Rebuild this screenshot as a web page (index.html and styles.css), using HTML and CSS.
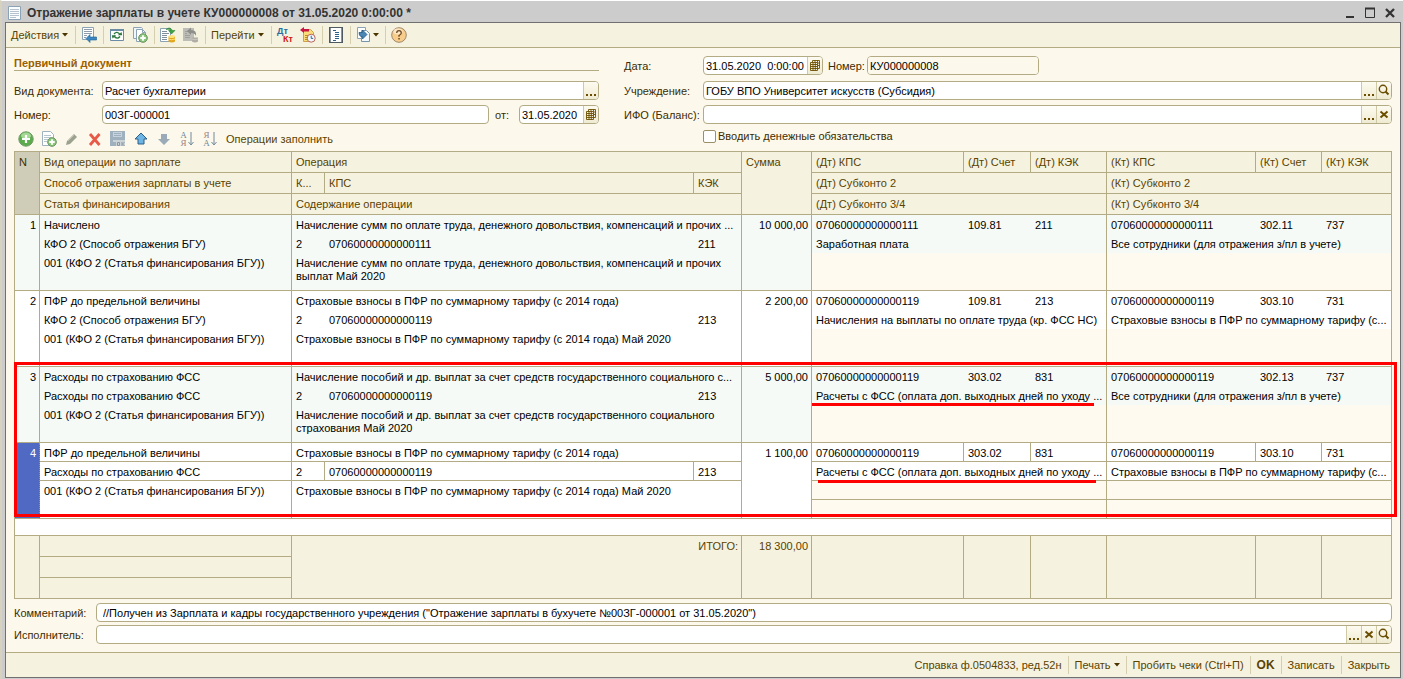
FILE: index.html
```html
<!DOCTYPE html>
<html lang="ru">
<head>
<meta charset="utf-8">
<title>Отражение зарплаты в учете</title>
<link rel="stylesheet" href="styles.css">
</head>
<body>
<svg class="defs" aria-hidden="true">
  <symbol id="sheet" viewBox="0 0 16 16"><path d="M1.500 1.500h12v13h-12z" fill="#fbfdfe" stroke="#8ba3b5"/><path d="M3 4.500h9M3 6.500h9M3 8.500h9M3 10.500h9M3 12.500h6" stroke="#b4c3cf"/></symbol>
  <symbol id="plus" viewBox="0 0 16 16"><circle cx="8" cy="8" r="7.200" fill="#5cab4c" stroke="#6f9a68"/><ellipse cx="8" cy="4.800" rx="5" ry="3.200" fill="#a5d895"/><path d="M8 4v8M4 8h8" stroke="#fff" stroke-width="2.200"/></symbol>
  <symbol id="copy" viewBox="0 0 16 16"><path d="M1.500 .5h8l1 1v10h-9z" fill="#f1f6fa" stroke="#8ba3b5"/><path d="M4.500 2.500h6l3 3v9h-9z" fill="#fff" stroke="#8ba3b5"/><path d="M10.500 2.500v3h3" fill="none" stroke="#8ba3b5"/><circle cx="11" cy="11" r="4.300" fill="#8cca7b" stroke="#66915f"/><path d="M11 8.300v5.400M8.300 11h5.400" stroke="#fff" stroke-width="1.800"/></symbol>
  <symbol id="addcopy" viewBox="0 0 16 16"><path d="M1.500 .5h8l3 3v11h-11z" fill="#fff" stroke="#9fb2c0"/><path d="M3 4.500h7M3 6.500h7M3 8.500h4M3 10.500h3" stroke="#b7c5cf"/><circle cx="11" cy="11" r="4.300" fill="#8cca7b" stroke="#66915f"/><path d="M11 8.300v5.400M8.300 11h5.400" stroke="#fff" stroke-width="1.800"/></symbol>
  <symbol id="dots" viewBox="0 0 14 17"><path d="M2 12h2v2H2zM6 12h2v2H6zM10 12h2v2h-2z" fill="#6b4e00"/></symbol>
  <symbol id="lens" viewBox="0 0 14 17"><circle cx="6" cy="7" r="3.700" fill="none" stroke="#6b4e00" stroke-width="1.400"/><path d="M8.500 9.500l3 3" stroke="#6b4e00" stroke-width="2"/></symbol>
  <symbol id="cross" viewBox="0 0 14 17"><path d="M3.500 5.500l7 6M10.500 5.500l-7 6" stroke="#6b4e00" stroke-width="2"/></symbol>
  <symbol id="cal" viewBox="0 0 14 17"><path d="M4.500 3.500h7v8h-2M4.500 3.500v2M7 3.500v2M9.500 3.500v2M9.500 6h2M9.500 8.500h2M2.500 5.500h7v8h-7zM2.500 7.500h7M2.500 9.500h7M2.500 11.500h7M5 5.500v8M7.300 5.500v8" fill="none" stroke="#6b4e00" stroke-width=".9"/></symbol>
  <symbol id="caret" viewBox="0 0 6 4"><path d="M0 0h6L3 3.500z" fill="#4a3500"/></symbol>
</svg>
<div class="window">
  <header class="titlebar">
    <svg class="icon"><use href="#sheet"/></svg>
    <h1>Отражение зарплаты в учете КУ000000008 от 31.05.2020 0:00:00 *</h1>
    <div class="winctl">
      <button aria-label="Свернуть"><svg viewBox="0 0 12 12"><path d="M2 10h8" stroke="#333" stroke-width="2"/></svg></button>
      <button aria-label="Развернуть"><svg viewBox="0 0 12 12"><path d="M1.500 1.500h9v9h-9z" fill="none" stroke="#333"/><path d="M1 1.500h10" stroke="#333" stroke-width="2"/></svg></button>
      <button aria-label="Закрыть окно"><svg viewBox="0 0 12 12"><path d="M2 2l8 8M10 2l-8 8" stroke="#333" stroke-width="2.300"/></svg></button>
    </div>
  </header>

  <div class="client">
  <nav class="toolbar">
    <div class="group"><button class="actions">Действия <svg class="caret"><use href="#caret"/></svg></button></div>
    <div class="group">
      <button aria-label="Найти в списке"><svg class="icon" viewBox="0 0 16 16"><path d="M1.500 .5h11v12h-11z" fill="#fff" stroke="#8ba3b5"/><path d="M3 2.500h8M3 4.500h8M3 6.500h8M3 8.500h3M3 10.500h2" stroke="#8f9daa"/><path d="M5 11.500l4-4V10h6.500v3H9v2.500z" fill="#3c88c0" stroke="#1d6296" stroke-width=".6"/></svg></button>
    </div>
    <div class="group">
      <button aria-label="Перечитать"><svg class="icon" viewBox="0 0 16 16"><path d="M1.500 2.500h13v11h-13z" fill="#fff" stroke="#6c8ca6"/><path d="M1 3h14" stroke="#6c8ca6" stroke-width="2"/><path d="M5 7q3-3.500 6 .5M11 9.500q-3 3.500-6-.5" fill="none" stroke="#2c7a3e" stroke-width="1.400"/><path d="M8.800 8.300h4.400L12.500 5zM2.800 8.200h4.400L3.500 11.500z" fill="#2c7a3e"/></svg></button>
      <button aria-label="Скопировать"><svg class="icon"><use href="#copy"/></svg></button>
    </div>
    <div class="group">
      <button aria-label="Провести"><svg class="icon" viewBox="0 0 16 16"><path d="M.5 1.500h10v13H.5z" fill="#fff" stroke="#8ba3b5"/><path d="M2 4.500h5M2 6.500h7M2 8.500h5M2 10.500h5M2 12.500h5" stroke="#7f8f9b"/><path d="M6 2.500Q10-1 12.500 3.500H15L11.500 7 8.500 3.500h2Q9 1.500 6 2.500z" fill="#3da344" stroke="#23782a" stroke-width=".5"/><path d="M8.500 9.500h6.500v5q-3 2-6.500 0z" fill="#e0a61e"/><ellipse cx="11.700" cy="9.500" rx="3.200" ry="1.500" fill="#ffe27a"/><path d="M8.500 12q3 1.500 6.500 0" fill="none" stroke="#ffe27a"/></svg></button>
      <button aria-label="Отменить проведение"><svg class="icon" viewBox="0 0 16 16"><path d="M0 1h11v13H0z" fill="#bdbdb8"/><path d="M2 4.500h3M2 6.500h2M2 8.500h5M2 10.500h5" stroke="#9f9f9b"/><path d="M4 4l4-3.500V3q6 0 5 6-1-3-5-3v2z" fill="#8e8e8b"/><path d="M9 10.500h6v4q-3 2-6 0z" fill="#aeaca4"/><path d="M9 12q3 1.500 6 0" fill="none" stroke="#cbc9bf"/></svg></button>
    </div>
    <div class="group"><button class="goto">Перейти <svg class="caret"><use href="#caret"/></svg></button></div>
    <div class="group">
      <button class="dtkt" aria-label="Результат проведения"><span class="dt">Дт</span><span class="kt">Кт</span></button>
      <button aria-label="Движения документа"><svg class="icon" viewBox="0 0 16 16"><path d="M3.500 2.500h7l3 3v9h-10z" fill="#fbdc7b" stroke="#c9a345"/><path d="M5 8.500h3M5 10.500h2M5 12.500h2" stroke="#b78b1f"/><path d="M0 3l4-3v2h5v2.500H4V6z" fill="#c81440"/><circle cx="11.200" cy="11.200" r="4" fill="#f0f8ff" stroke="#b9665a"/><path d="M11.200 8.700v2.700h2" fill="none" stroke="#31648f"/></svg></button>
    </div>
    <div class="group">
      <button aria-label="Структура"><svg class="icon" viewBox="0 0 16 16"><path d="M1 0h14v16H1z" fill="#8c959c"/><path d="M3 1h10v14H3z" fill="#fff"/><path d="M1.500 0v16M14.500 0v16" stroke="#4e5960"/><path d="M1 .5h14M1 15.500h14" stroke="#4e5960"/><path d="M5 3.500h3M7 5.500h4M7 7.500h4M7 9.500h4M7 11.500h4M5 13.500h3" stroke="#2d6288"/></svg></button>
    </div>
    <div class="group">
      <button class="linked" aria-label="Ввести на основании"><svg class="icon" viewBox="0 0 16 16"><path d="M1.500 .5h8v11h-8z" fill="#fff" stroke="#8ba3b5"/><path d="M5.500 3.500h5l3 3v8h-8z" fill="#f4f9fc" stroke="#7695ab"/><path d="M3 5.500h3.500V3l4.500 4.500L6.500 12V9.500H5Q3 9 3 5.500z" fill="#4a86b4" stroke="#174f80" stroke-width=".7"/></svg><svg class="caret"><use href="#caret"/></svg></button>
    </div>
    <div class="group">
      <button aria-label="Справка"><svg class="icon" viewBox="0 0 16 16"><circle cx="8" cy="8" r="7.300" fill="#f8cd8c" stroke="#9e876b"/><ellipse cx="7" cy="4.500" rx="4.500" ry="3" fill="#fde6c4"/><path d="M5.700 6q0-2.300 2.300-2.300T10.300 6Q10.300 7.300 8 8.500v1.300" fill="none" stroke="#6b4a20" stroke-width="1.300"/><path d="M7.300 11h1.500v1.500H7.300z" fill="#6b4a20"/></svg></button>
    </div>
  </nav>

  <main>
    <div class="form">
      <section class="col left">
        <h2>Первичный документ</h2>
        <div class="line"><label for="kind">Вид документа:</label>
          <div class="field grow"><input id="kind" value="Расчет бухгалтерии"><button aria-label="Выбрать вид"><svg><use href="#dots"/></svg></button></div></div>
        <div class="line"><label for="num">Номер:</label>
          <div class="field grow"><input id="num" value="00ЗГ-000001"></div>
          <label class="from" for="numdate">от:</label>
          <div class="field date"><input id="numdate" value="31.05.2020"><button aria-label="Календарь"><svg><use href="#cal"/></svg></button></div></div>
      </section>
      <section class="col right">
        <div class="line first"><label for="date">Дата:</label>
          <div class="field datetime"><input id="date" value="31.05.2020  0:00:00"><button aria-label="Календарь даты"><svg><use href="#cal"/></svg></button></div>
          <label class="short" for="docnum">Номер:</label>
          <div class="field docnum"><input id="docnum" value="КУ000000008"></div></div>
        <div class="line"><label for="org">Учреждение:</label>
          <div class="field grow"><input id="org" value="ГОБУ ВПО Университет искусств (Субсидия)"><button aria-label="Выбрать учреждение"><svg><use href="#dots"/></svg></button><button aria-label="Открыть учреждение"><svg><use href="#lens"/></svg></button></div></div>
        <div class="line"><label for="ifo">ИФО (Баланс):</label>
          <div class="field grow"><input id="ifo"><button aria-label="Выбрать ИФО"><svg><use href="#dots"/></svg></button><button aria-label="Очистить ИФО"><svg><use href="#cross"/></svg></button></div></div>
      </section>
      <div class="rowtools">
        <button aria-label="Добавить"><svg class="icon"><use href="#plus"/></svg></button>
        <button aria-label="Добавить копированием"><svg class="icon"><use href="#addcopy"/></svg></button>
        <button aria-label="Изменить"><svg class="icon" viewBox="0 0 16 16"><path d="M2 14l1-4 7-7 3 3-7 7z" fill="#9ba28e"/><path d="M4 10l6-6" stroke="#bdc2b3"/></svg></button>
        <button aria-label="Удалить"><svg class="icon" viewBox="0 0 16 16"><path d="M3 3l9.500 11M12.500 3L3 14" stroke="#e85a48" stroke-width="2.800"/></svg></button>
        <button aria-label="Завершить"><svg class="icon" viewBox="0 0 16 16"><path d="M0 0h15v15H0z" fill="#9fb0be"/><path d="M3 1h9v5H3z" fill="#c7d3dc"/><path d="M4 2.500h7M4 4.500h7" stroke="#9fb0be"/><path d="M3 9h12v6H6v-4H3z" fill="#ccd3d6"/><path d="M7.500 11.500h2v3h-2zM12 11v4M14.500 11L12.500 13l2 2" fill="none" stroke="#8897a3"/></svg></button>
        <button aria-label="Вверх"><svg class="icon" viewBox="0 0 16 16"><path d="M8 2l6 6h-3v5H5V8H2z" fill="#6cb4e4" stroke="#2c5f88"/></svg></button>
        <button aria-label="Вниз"><svg class="icon" viewBox="0 0 16 16"><path d="M8 14l6-6h-3V3H5v5H2z" fill="#9aabb7"/></svg></button>
        <button class="sort" aria-label="Сортировать по возрастанию"><span><i>А</i><i class="b">Я</i></span><svg viewBox="0 0 6 14"><path d="M3 0v12M.5 10L3 13l2.500-3" fill="none" stroke="#73899d"/></svg></button>
        <button class="sort" aria-label="Сортировать по убыванию"><span><i class="b">Я</i><i>А</i></span><svg viewBox="0 0 6 14"><path d="M3 0v12M.5 10L3 13l2.500-3" fill="none" stroke="#73899d"/></svg></button>
        <button class="fill">Операции заполнить</button>
      </div>
      <label class="check"><input type="checkbox">Вводить денежные обязательства</label>
    </div>

    <div class="tablewrap">
      <table>
        <colgroup><col class="w-n"><col class="w-kind"><col class="w-k"><col><col class="w-kek"><col class="w-sum"><col class="w-dt1"><col class="w-dt2"><col class="w-dt3"><col class="w-kt1"><col class="w-kt2"><col class="w-kt3"></colgroup>
        <thead>
          <tr><th rowspan="3" class="n">N</th><th>Вид операции по зарплате</th><th colspan="3">Операция</th><th rowspan="3">Сумма</th><th>(Дт) КПС</th><th>(Дт) Счет</th><th>(Дт) КЭК</th><th>(Кт) КПС</th><th>(Кт) Счет</th><th>(Кт) КЭК</th></tr>
          <tr><th>Способ отражения зарплаты в учете</th><th>К...</th><th>КПС</th><th>КЭК</th><th colspan="3">(Дт) Субконто 2</th><th colspan="3">(Кт) Субконто 2</th></tr>
          <tr><th>Статья финансирования</th><th colspan="3">Содержание операции</th><th colspan="3">(Дт) Субконто 3/4</th><th colspan="3">(Кт) Субконто 3/4</th></tr>
        </thead>
        <tbody class="tint">
          <tr><td rowspan="4" class="num e l">1</td><td class="e">Начислено</td><td colspan="3" class="e">Начисление сумм по оплате труда, денежного довольствия, компенсаций и прочих ...</td><td rowspan="4" class="num e l">10 000,00</td><td>07060000000000111</td><td>109.81</td><td class="e">211</td><td>07060000000000111</td><td>302.11</td><td class="e">737</td></tr>
          <tr><td class="e">КФО 2 (Способ отражения БГУ)</td><td>2</td><td>07060000000000111</td><td class="e">211</td><td colspan="3" class="e">Заработная плата</td><td colspan="3" class="e">Все сотрудники (для отражения з/пл в учете)</td></tr>
          <tr><td rowspan="2" class="e l">001 (КФО 2 (Статья финансирования БГУ))</td><td colspan="3" rowspan="2" class="e l">Начисление сумм по оплате труда, денежного довольствия, компенсаций и прочих<br>выплат Май 2020</td><td colspan="3" class="e p"></td><td colspan="3" class="e p"></td></tr>
          <tr><td colspan="3" class="e l p"></td><td colspan="3" class="e l p"></td></tr>
        </tbody>
        <tbody>
          <tr><td rowspan="4" class="num e l">2</td><td class="e">ПФР до предельной величины</td><td colspan="3" class="e">Страховые взносы в ПФР по суммарному тарифу (с 2014 года)</td><td rowspan="4" class="num e l">2 200,00</td><td>07060000000000119</td><td>109.81</td><td class="e">213</td><td>07060000000000119</td><td>303.10</td><td class="e">731</td></tr>
          <tr><td class="e">КФО 2 (Способ отражения БГУ)</td><td>2</td><td>07060000000000119</td><td class="e">213</td><td colspan="3" class="e">Начисления на выплаты по оплате труда (кр. ФСС НС)</td><td colspan="3" class="e">Страховые взносы в ПФР по суммарному тарифу (с...</td></tr>
          <tr><td rowspan="2" class="e l">001 (КФО 2 (Статья финансирования БГУ))</td><td colspan="3" rowspan="2" class="e l">Страховые взносы в ПФР по суммарному тарифу (с 2014 года) Май 2020</td><td colspan="3" class="e p"></td><td colspan="3" class="e p"></td></tr>
          <tr><td colspan="3" class="e l p"></td><td colspan="3" class="e l p"></td></tr>
        </tbody>
        <tbody class="tint">
          <tr><td rowspan="4" class="num e l">3</td><td class="e">Расходы по страхованию ФСС</td><td colspan="3" class="e">Начисление пособий и др. выплат за счет средств государственного социального с...</td><td rowspan="4" class="num e l">5 000,00</td><td>07060000000000119</td><td>303.02</td><td class="e">831</td><td>07060000000000119</td><td>302.13</td><td class="e">737</td></tr>
          <tr><td class="e">Расходы по страхованию ФСС</td><td>2</td><td>07060000000000119</td><td class="e">213</td><td colspan="3" class="e marked">Расчеты с ФСС (оплата доп. выходных дней по уходу ...</td><td colspan="3" class="e">Все сотрудники (для отражения з/пл в учете)</td></tr>
          <tr><td rowspan="2" class="e l">001 (КФО 2 (Статья финансирования БГУ))</td><td colspan="3" rowspan="2" class="e l">Начисление пособий и др. выплат за счет средств государственного социального<br>страхования Май 2020</td><td colspan="3" class="e p"></td><td colspan="3" class="e p"></td></tr>
          <tr><td colspan="3" class="e l p"></td><td colspan="3" class="e l p"></td></tr>
        </tbody>
        <tbody class="selected">
          <tr><td rowspan="4" class="num current">4</td><td>ПФР до предельной величины</td><td colspan="3">Страховые взносы в ПФР по суммарному тарифу (с 2014 года)</td><td rowspan="4" class="num">1 100,00</td><td>07060000000000119</td><td>303.02</td><td>831</td><td>07060000000000119</td><td>303.10</td><td>731</td></tr>
          <tr><td>Расходы по страхованию ФСС</td><td>2</td><td>07060000000000119</td><td>213</td><td colspan="3" class="marked inset">Расчеты с ФСС (оплата доп. выходных дней по уходу ...</td><td colspan="3">Страховые взносы в ПФР по суммарному тарифу (с...</td></tr>
          <tr><td rowspan="2">001 (КФО 2 (Статья финансирования БГУ))</td><td colspan="3" rowspan="2">Страховые взносы в ПФР по суммарному тарифу (с 2014 года) Май 2020</td><td colspan="3" class="p"></td><td colspan="3" class="p"></td></tr>
          <tr><td colspan="3" class="p"></td><td colspan="3" class="p"></td></tr>
        </tbody>
        <tbody><tr class="spare"><td colspan="12" class="e l"></td></tr></tbody>
        <tfoot>
          <tr><td rowspan="3"></td><td></td><td rowspan="3" colspan="3" class="num">ИТОГО:</td><td rowspan="3" class="num">18 300,00</td><td rowspan="3"></td><td rowspan="3"></td><td rowspan="3"></td><td rowspan="3"></td><td rowspan="3"></td><td rowspan="3"></td></tr>
          <tr><td></td></tr>
          <tr><td></td></tr>
        </tfoot>
      </table>
      <div class="redbox"></div>
    </div>

    <div class="notes">
      <div class="line"><label for="comment">Комментарий:</label>
        <div class="field grow wide"><input id="comment" value="//Получен из Зарплата и кадры государственного учреждения (&quot;Отражение зарплаты в бухучете №00ЗГ-000001 от 31.05.2020&quot;)"></div></div>
      <div class="line"><label for="exec">Исполнитель:</label>
        <div class="field grow"><input id="exec"><button aria-label="Выбрать исполнителя"><svg><use href="#dots"/></svg></button><button aria-label="Очистить исполнителя"><svg><use href="#cross"/></svg></button><button aria-label="Открыть исполнителя"><svg><use href="#lens"/></svg></button></div></div>
    </div>
  </main>

  <footer class="commands">
    <button>Справка ф.0504833, ред.52н</button>
    <button>Печать <svg class="caret"><use href="#caret"/></svg></button>
    <button>Пробить чеки (Ctrl+П)</button>
    <button class="ok">OK</button>
    <button>Записать</button>
    <button>Закрыть</button>
  </footer>
  </div>
</div>
</body>
</html>
```

FILE: styles.css
```css
* { box-sizing: border-box; }
:root { --line: #b3ab84; --brown: #5a4300; --cream: #fcf9ec; --beige: #f5f2df; }
body { margin: 0; background: #ccc; font: 11px/13px "Liberation Sans", Arial, sans-serif; color: #3d2c00; }
button, input { font: inherit; color: inherit; margin: 0; }
button { background: none; border: 0; padding: 0; display: flex; align-items: center; white-space: nowrap; }
h1, h2 { margin: 0; font-size: 11px; line-height: 14px; }
.defs { position: absolute; width: 0; height: 0; }
.icon { width: 16px; height: 16px; display: block; flex: none; }
.caret { width: 6px; height: 4px; margin-left: 3px; flex: none; }

.window { min-height: 100vh; display: flex; flex-direction: column; border-top: 1px solid #fff; border-left: 2px solid #d6d2bd; padding: 0 2px 1px 3px; }
.titlebar { display: flex; align-items: center; height: 21px; padding: 2px 5px 0 2px; }
.titlebar h1 { flex: 1; padding-left: 4px; font-size: 12px; color: #333; }
.winctl { display: flex; gap: 8px; }
.winctl svg { width: 12px; height: 12px; }

.client { flex: 1; display: flex; flex-direction: column; border: 1px solid #707070; background: var(--cream); }
.toolbar { display: flex; align-items: center; height: 25px; padding-left: 5px; background: var(--beige); border-bottom: 1px solid var(--line); color: var(--brown); }
.group { display: flex; align-items: center; gap: 7px; height: 18px; }
.group + .group { margin-left: 6px; padding-left: 5px; border-left: 1px solid #d5cfb0; }
.actions { width: 58px; }
.goto { width: 54px; }
.linked .caret { margin-left: 1px; }
.dtkt { width: 16px; height: 16px; font-size: 9px; font-weight: bold; line-height: 8px; flex-direction: column; }
.dt { align-self: flex-start; color: #2c6c9c; }
.kt { align-self: flex-end; color: #d01818; }

main { flex: 1; padding: 8px 8px 0; }
.form { display: grid; grid-template-columns: 585px 1fr; column-gap: 25px; row-gap: 5px; }
.col { display: flex; flex-direction: column; gap: 5px; }
h2 { height: 15px; margin-bottom: 5px; color: #9a5f00; border-bottom: 1px solid var(--line); }
.line { display: flex; align-items: center; height: 19px; }
.first { margin-bottom: 1px; }
.line label { white-space: nowrap; padding-top: 1px; }
.left label:first-child { width: 88px; }
.right label:first-child { width: 79px; }
.notes label { width: 82px; }
.line .from { margin: 0 10px 0 6px; }
.line .short { width: 39px; margin-left: 5px; }
.field { display: flex; height: 19px; border: 1px solid var(--line); border-radius: 4px; background: #fff; overflow: hidden; }
.grow { flex: 1; }
.date { width: 80px; }
.datetime { width: 120px; }
.docnum { width: 172px; }
.field input { flex: 1; min-width: 0; width: 0; border: 0; padding: 1px 2px 0; background: transparent; color: #000; outline: 0; white-space: pre; }
.docnum input { background: var(--cream); }
.field.wide input { padding-left: 6px; }
.field button { width: 15px; flex: none; border-left: 1px solid #cfc9a6; background: linear-gradient(#fdfbf0, #efebd2); }
.field button svg { width: 14px; height: 17px; display: block; }
.rowtools { display: flex; align-items: center; gap: 7px; height: 22px; padding: 0 0 2px 4px; color: var(--brown); }
.sort { width: 16px; height: 16px; }
.sort span { display: flex; flex-direction: column; width: 9px; }
.sort i { font: 9px/8px "Liberation Serif", serif; color: #6f8799; }
.sort .b { color: #a08080; }
.sort svg { width: 6px; height: 14px; }
.fill { margin-left: 1px; }
.check { display: flex; align-items: center; height: 15px; margin-left: 79px; }
.check input { appearance: none; width: 13px; height: 13px; margin: 0 2px 0 0; border: 1px solid #9a9068; border-radius: 2px; background: #fff; }

.tablewrap { position: relative; }
table { width: 100%; table-layout: fixed; border-collapse: separate; border-spacing: 0; border: solid var(--line); border-width: 1px 0 0 1px; background: #fff; }
.w-n { width: 25px; } .w-kind { width: 252px; } .w-k { width: 33px; } .w-kek { width: 48px; } .w-sum { width: 70px; }
.w-dt1 { width: 152px; } .w-dt2 { width: 67px; } .w-dt3 { width: 76px; }
.w-kt1 { width: 149px; } .w-kt2 { width: 66px; } .w-kt3 { width: 70px; }
th, td { padding: 4px 3px 0 4px; vertical-align: top; text-align: left; white-space: nowrap; border: 0 solid var(--line); }
th { height: 21px; background: var(--beige); color: var(--brown); font-weight: normal; border-width: 0 1px 1px 0; }
th.n { background: #cfccb7; color: #3d2c00; }
tbody tr { height: 19px; }
td { height: 19px; color: #000; }
.tint td { background: #f5faf7; }
tbody .p, .tint .p { background: #fffaf0; }
.e { border-right-width: 1px; }
.l { border-bottom-width: 1px; }
.selected td { border-width: 0 1px 1px 0; }
.num { text-align: right; }
.selected .current { background: #5069c3; color: #fff; border-right: 1px dotted #b3962a; }
tbody .spare td { height: 17px; padding: 0; }
.spare { height: 17px; }
tfoot td { height: 21px; background: var(--beige); border-width: 0 1px 1px 0; color: var(--brown); }
.marked { position: relative; }
.marked::after { content: ""; position: absolute; z-index: 1; left: 0; right: 12px; bottom: -1px; height: 3px; background: #f00; }
.marked.inset::after { left: 6px; right: 10px; bottom: -3px; }
.redbox { position: absolute; top: 211px; left: 0; right: -5px; height: 155px; border: 3px solid #f00; pointer-events: none; }

.notes { display: flex; flex-direction: column; gap: 3px; padding: 4px 0 8px; }
.commands { display: flex; justify-content: flex-end; align-items: center; height: 25px; padding-right: 4px; background: var(--beige); border-top: 1px solid var(--line); color: var(--brown); }
.commands button { padding: 0 6px; height: 18px; }
.commands button + button { border-left: 1px solid #d5cfb0; }
.commands .ok { font-weight: bold; font-size: 12px; }
```
